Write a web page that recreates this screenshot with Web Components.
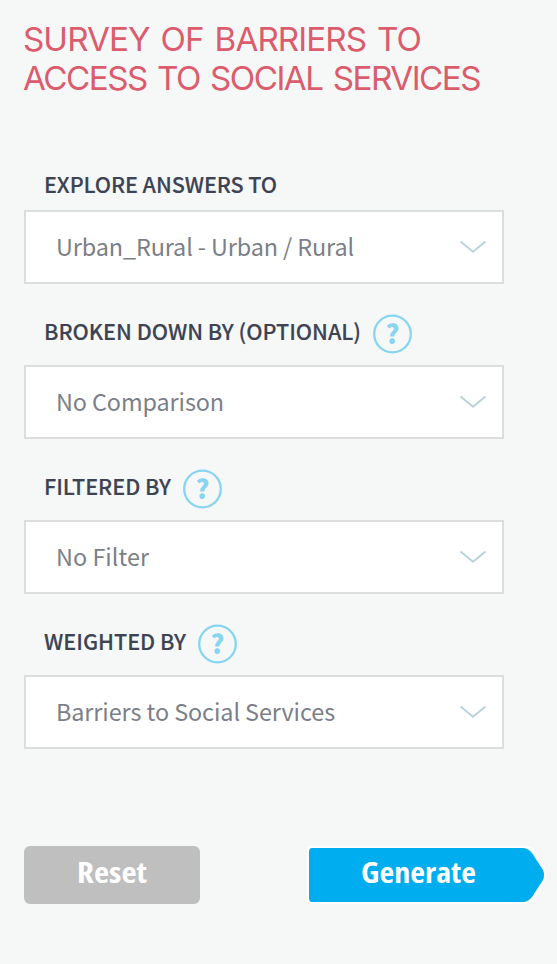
<!DOCTYPE html>
<html lang="en">
<head>
<meta charset="utf-8">
<title>Survey of Barriers to Access to Social Services</title>
<style>
body{margin:0;background:#f6f8f8;font-family:"Noto Sans CJK SC","Noto Sans",sans-serif}
</style>
</head>
<body>
<survey-panel></survey-panel>
<script>
const define = (name, html, setup) => {
  const t = document.createElement('template');
  t.innerHTML = html;
  customElements.define(name, class extends HTMLElement {
    constructor() {
      super();
      this.attachShadow({mode: 'open'}).append(t.content.cloneNode(true));
    }
    connectedCallback() { if (setup) setup(this, this.shadowRoot); }
  });
};

/* A single line of text that fills the given width: by tracking, or by
   widening the letters when the "stretch" attribute is set. */
define('fit-text', `<style>
:host{display:inline-block;white-space:nowrap;text-align:left}
span{display:inline-block;transform-origin:0 50%}
</style><span><slot></slot></span>`, (el, root) => {
  const span = root.querySelector('span');
  const target = Number(el.getAttribute('width'));
  const natural = span.getBoundingClientRect().width;
  if (el.hasAttribute('stretch')) {
    el.style.width = target + 'px';
    span.style.transform = `scaleX(${target / natural})`;
  } else {
    span.style.letterSpacing = (target - natural) / el.textContent.length + 'px';
  }
});

define('survey-title', `<style>
:host{display:flex;flex-direction:column;align-items:flex-start;margin-left:-1px;color:#db5c6c;font:400 33.2px/39px Inter,sans-serif;word-spacing:2.5px}
</style><slot></slot>`);

define('help-icon', `<style>
:host{display:grid;width:40px;height:40px}
svg,div{grid-area:1/1}
div{width:39px;color:#87d5f0;font:900 26px/38px "Noto Sans CJK SC",sans-serif;text-align:center}
</style><svg width="40" height="40" viewBox="0 0 40 40"><circle cx="19.5" cy="20" r="18.3" fill="none" stroke="#87d5f0" stroke-width="2.3"/></svg><div>?</div>`);

define('select-box', `<style>
:host{box-sizing:border-box;display:flex;align-items:center;justify-content:space-between;width:480px;height:74px;border:2px solid #dcdedd;background:#fff;padding:0 15px 0 30px;color:#7b7f89;font-size:23.4px;line-height:34px}
::slotted(*){margin-bottom:2px}
svg{display:block}
</style><slot></slot><svg width="28" height="16" viewBox="0 0 28 16" fill="none" stroke="#b9d3db" stroke-width="2"><path d="M1.5 2.5 14 12.7 26.5 2.5"/></svg>`);

define('survey-field', `<style>
:host{display:block}
header{box-sizing:border-box;height:81px;padding:28px 0 0 20px;display:flex;align-items:flex-start;gap:12px;color:#3d4353;font-size:21.6px;line-height:38px;font-weight:500;-webkit-text-stroke:.15px #3d4353}
:host([plain]) header{height:45px;padding-top:0}
::slotted(help-icon){margin-top:2px;-webkit-text-stroke:0}
</style><header><slot name="label"></slot><slot name="help"></slot></header><slot></slot>`);

define('reset-button', `<style>
:host{display:block;box-sizing:border-box;width:176px;height:58px;border-radius:6px;background:#bfbfbf;color:#fff;text-align:center;font:700 28px/53px "Open Sans",sans-serif;font-stretch:75%}
</style><slot></slot>`);

define('generate-button', `<style>
:host{display:grid;width:240px;height:60px;margin-right:-1px;color:#fff;font:700 28px/55px "Open Sans",sans-serif;font-stretch:75%}
svg,div{grid-area:1/1}
div{position:relative;padding-left:54px}
</style><svg width="240" height="60" viewBox="0 0 240 60"><path d="M5 1H219Q224 1 227 5L237 23Q240 30 237 37L227 55Q224 59 219 59H5Q0 59 0 54V6Q0 1 5 1Z" fill="#fff"/><path d="M5 3H217Q222 4 225 8L236 25Q238 30 236 35L225 52Q222 56 217 57H5Q2 57 2 53V7Q2 3 5 3Z" fill="#00aeef"/></svg><div><slot></slot></div>`);

define('survey-panel', `<style>
:host{display:block;box-sizing:border-box;height:964px;padding:20px 11px 0 24px}
main{margin-top:67px}
footer{display:flex;justify-content:space-between;margin-top:96px}
reset-button{margin-top:1px}
</style>
<survey-title><fit-text width="398">SURVEY OF BARRIERS TO</fit-text><fit-text width="457">ACCESS TO SOCIAL SERVICES</fit-text></survey-title>
<main>
<survey-field plain><fit-text slot="label" width="233">EXPLORE ANSWERS TO</fit-text><select-box><fit-text width="298">Urban_Rural - Urban / Rural</fit-text></select-box></survey-field>
<survey-field><fit-text slot="label" width="317">BROKEN DOWN BY (OPTIONAL)</fit-text><help-icon slot="help"></help-icon><select-box><fit-text width="168">No Comparison</fit-text></select-box></survey-field>
<survey-field><fit-text slot="label" width="127">FILTERED BY</fit-text><help-icon slot="help"></help-icon><select-box><fit-text width="93">No Filter</fit-text></select-box></survey-field>
<survey-field><fit-text slot="label" width="142">WEIGHTED BY</fit-text><help-icon slot="help"></help-icon><select-box><fit-text width="279">Barriers to Social Services</fit-text></select-box></survey-field>
</main>
<footer><reset-button><fit-text stretch width="70">Reset</fit-text></reset-button><generate-button><fit-text stretch width="115">Generate</fit-text></generate-button></footer>`);
</script>
</body>
</html>
